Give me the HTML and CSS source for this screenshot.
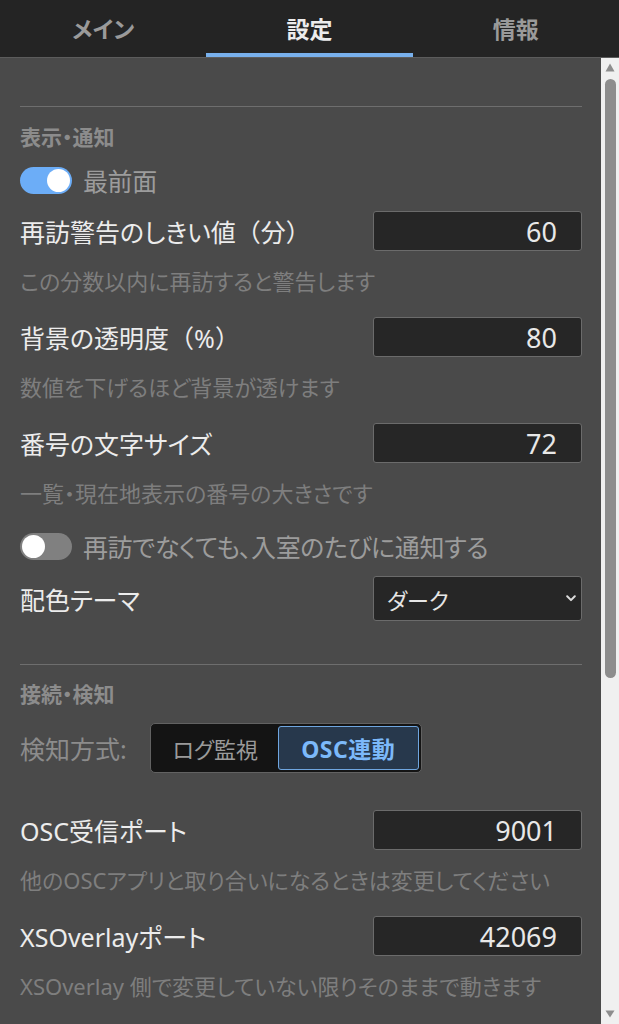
FILE: index.html
```html
<!DOCTYPE html>
<html lang="ja">
<head>
<meta charset="utf-8">
<title>設定</title>
<link rel="stylesheet" href="styles.css">
</head>
<body>
<nav class="tabs">
  <div class="tab">メイン</div>
  <div class="tab active">設定</div>
  <div class="tab">情報</div>
</nav>
<div class="main">
  <div class="content">
    <section class="section first">
      <div class="heading">表示・通知</div>
      <div class="toggle-row">
        <span class="switch on"><span class="knob"></span></span>
        <span class="toggle-label">最前面</span>
      </div>
      <div class="field">
        <span class="label">再訪警告のしきい値<span class="fw">（分）</span></span>
        <input class="num" type="text" value="60" readonly>
      </div>
      <div class="hint">この分数以内に再訪すると警告します</div>
      <div class="field">
        <span class="label">背景の透明度<span class="fw">（%）</span></span>
        <input class="num" type="text" value="80" readonly>
      </div>
      <div class="hint">数値を下げるほど背景が透けます</div>
      <div class="field">
        <span class="label">番号の文字サイズ</span>
        <input class="num" type="text" value="72" readonly>
      </div>
      <div class="hint">一覧・現在地表示の番号の大きさです</div>
      <div class="toggle-row">
        <span class="switch"><span class="knob"></span></span>
        <span class="toggle-label">再訪でなくても、入室のたびに通知する</span>
      </div>
      <div class="field select-field">
        <span class="label">配色テーマ</span>
        <div class="select">
          <span>ダーク</span>
          <svg class="chev" width="10" height="7" viewBox="0 0 10 7"><path d="M1.2 1.3 L5 5.1 L8.8 1.3" fill="none" stroke="#dcdcdc" stroke-width="2" stroke-linecap="round" stroke-linejoin="round"/></svg>
        </div>
      </div>
    </section>
    <section class="section second">
      <div class="heading">接続・検知</div>
      <div class="seg-row">
        <span class="seg-label">検知方式:</span>
        <div class="seg">
          <span class="seg-btn log">ログ監視</span>
          <span class="seg-btn osc active">OSC連動</span>
        </div>
      </div>
      <div class="field port">
        <span class="label">OSC受信ポート</span>
        <input class="num" type="text" value="9001" readonly>
      </div>
      <div class="hint">他のOSCアプリと取り合いになるときは変更してください</div>
      <div class="field">
        <span class="label">XSOverlayポート</span>
        <input class="num" type="text" value="42069" readonly>
      </div>
      <div class="hint">XSOverlay 側で変更していない限りそのままで動きます</div>
    </section>
  </div>
  <div class="scrollbar">
    <svg class="arrow up" width="10" height="9" viewBox="0 0 10 9"><path d="M5 0.5 L9.5 8.5 L0.5 8.5 Z" fill="#8d8d8d"/></svg>
    <div class="thumb"></div>
    <div class="track-rest"></div>
    <svg class="arrow down" width="10" height="8" viewBox="0 0 10 8"><path d="M0.5 0.5 L9.5 0.5 L5 7.5 Z" fill="#8d8d8d"/></svg>
  </div>
</div>
</body>
</html>
```
FILE: styles.css
```css
* { box-sizing: border-box; }
html, body {
  margin: 0;
  background: #4a4a4a;
}
body {
  width: 619px;
  height: 1024px;
  overflow: hidden;
  font-family: "Noto Sans", "Noto Sans CJK JP", sans-serif;
  font-feature-settings: "palt";
  color: #ececec;
}

.tabs {
  display: flex;
  height: 58px;
  background: #242424;
  border-bottom: 1px solid #5c5c5c;
}
.tab {
  flex: 1;
  display: flex;
  align-items: center;
  justify-content: center;
  font-size: 23px;
  font-weight: 700;
  color: #9a9a9a;
  border-bottom: 4px solid transparent;
  padding-top: 2px;
}
.tab.active {
  color: #ececec;
  border-bottom-color: #78b0ec;
}

.main {
  display: flex;
  height: 966px;
}
.content {
  flex: 1;
  padding: 0 19px 0 20px;
}

.section {
  border-top: 1px solid #6e6e6e;
}
.section.first { margin-top: 48px; }
.section.second { margin-top: 43px; }

.heading {
  margin-top: 15px;
  height: 28px;
  line-height: 28px;
  font-size: 21px;
  font-weight: 700;
  color: #8c8c8c;
}
.first .heading { margin-top: 16px; }

.toggle-row {
  display: flex;
  align-items: center;
  gap: 11px;
  height: 34px;
}
.heading + .toggle-row { margin-top: 12px; }
.toggle-row + .field { margin-top: 14px; }
.toggle-label {
  font-size: 25px;
  color: #9c9c9c;
  white-space: nowrap;
  letter-spacing: -0.4px;
}
.switch {
  width: 52px;
  height: 27px;
  border-radius: 14px;
  background: #808080;
  display: flex;
  align-items: center;
  padding: 0 2px;
  flex-shrink: 0;
}
.switch.on {
  background: #6cadf7;
  justify-content: flex-end;
}
.knob {
  width: 23px;
  height: 23px;
  border-radius: 50%;
  background: #ffffff;
}

.field {
  display: flex;
  align-items: center;
  justify-content: space-between;
  height: 40px;
}
.label {
  font-size: 25px;
  color: #ececec;
  white-space: nowrap;
}
.fw {
  font-feature-settings: normal;
}
.num {
  width: 209px;
  height: 40px;
  background: #262626;
  border: 1px solid #6b6b6b;
  border-radius: 3px;
  color: #e8e8e8;
  font-family: "Noto Sans", sans-serif;
  font-size: 27px;
  text-align: right;
  padding: 0 24px 0 10px;
  outline: none;
  margin: 0;
}

.hint {
  margin: 15px 0 21px;
  height: 30px;
  line-height: 30px;
  font-size: 22px;
  color: #7e7e7e;
  white-space: nowrap;
}

.select-field { height: 45px; }
.toggle-row + .select-field { margin-top: 13px; }
.select {
  width: 209px;
  height: 45px;
  background: #262626;
  border: 1px solid #6b6b6b;
  border-radius: 3px;
  display: flex;
  align-items: center;
  justify-content: space-between;
  padding: 0 5px 0 13px;
  font-size: 22px;
  color: #e6e6e6;
}

.seg-row {
  display: flex;
  align-items: center;
  gap: 23px;
  margin-top: 15px;
  height: 50px;
}
.seg-label {
  font-size: 25px;
  color: #8c8c8c;
}
.seg {
  display: flex;
  background: #141414;
  border: 1px solid #626262;
  border-radius: 5px;
  padding: 2px;
}
.seg-btn {
  height: 44px;
  display: flex;
  align-items: center;
  justify-content: center;
  font-size: 22px;
  color: #9a9a9a;
  border: 1px solid transparent;
  border-radius: 3px;
}
.seg-btn.log { width: 125px; }
.seg-btn.osc { width: 141px; }
.seg-btn.active {
  background: #27384c;
  border-color: #6fa6e0;
  color: #7cb9fa;
  font-weight: 700;
  font-size: 23px;
  letter-spacing: 0.5px;
}

.field.port { margin-top: 37px; }

.scrollbar {
  width: 18px;
  background: #f0f0f0;
  display: flex;
  flex-direction: column;
  align-items: center;
}
.arrow.up { margin-top: 5px; }
.thumb {
  margin-top: 7px;
  width: 11px;
  height: 599px;
  border-radius: 6px;
  background: #8d8d8d;
}
.track-rest { flex: 1; }
.arrow.down { margin-bottom: 6px; }
```
